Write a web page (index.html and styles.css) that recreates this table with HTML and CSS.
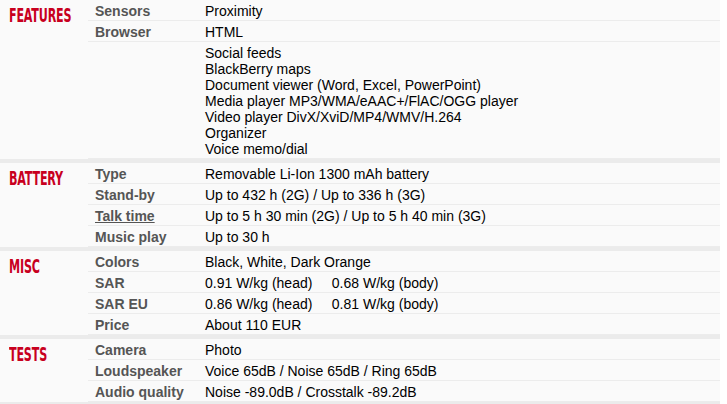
FILE: index.html
```html
<!DOCTYPE html>
<html>
<head>
<meta charset="utf-8">
<link rel="stylesheet" href="styles.css">
</head>
<body>
<div class="specs">
  <div class="section">
    <div class="title"><span>FEATURES</span></div>
    <div class="rows">
      <div class="row"><div class="label">Sensors</div><div class="value">Proximity</div></div>
      <div class="row"><div class="label">Browser</div><div class="value">HTML</div></div>
      <div class="row"><div class="label"></div><div class="value">Social feeds<br>BlackBerry maps<br>Document viewer (Word, Excel, PowerPoint)<br>Media player MP3/WMA/eAAC+/FlAC/OGG player<br>Video player DivX/XviD/MP4/WMV/H.264<br>Organizer<br>Voice memo/dial</div></div>
    </div>
  </div>
  <div class="section">
    <div class="title"><span>BATTERY</span></div>
    <div class="rows">
      <div class="row"><div class="label">Type</div><div class="value">Removable Li-Ion 1300 mAh battery</div></div>
      <div class="row"><div class="label">Stand-by</div><div class="value">Up to 432 h (2G) / Up to 336 h (3G)</div></div>
      <div class="row"><div class="label"><a class="link" href="#">Talk time</a></div><div class="value">Up to 5 h 30 min (2G) / Up to 5 h 40 min (3G)</div></div>
      <div class="row"><div class="label">Music play</div><div class="value">Up to 30 h</div></div>
    </div>
  </div>
  <div class="section">
    <div class="title"><span>MISC</span></div>
    <div class="rows">
      <div class="row"><div class="label">Colors</div><div class="value">Black, White, Dark Orange</div></div>
      <div class="row"><div class="label">SAR</div><div class="value">0.91 W/kg (head) &nbsp; &nbsp; 0.68 W/kg (body)</div></div>
      <div class="row"><div class="label">SAR EU</div><div class="value">0.86 W/kg (head) &nbsp; &nbsp; 0.81 W/kg (body)</div></div>
      <div class="row"><div class="label">Price</div><div class="value">About 110 EUR</div></div>
    </div>
  </div>
  <div class="section">
    <div class="title"><span>TESTS</span></div>
    <div class="rows">
      <div class="row"><div class="label">Camera</div><div class="value">Photo</div></div>
      <div class="row"><div class="label">Loudspeaker</div><div class="value">Voice 65dB / Noise 65dB / Ring 65dB</div></div>
      <div class="row"><div class="label">Audio quality</div><div class="value">Noise -89.0dB / Crosstalk -89.2dB</div></div>
    </div>
  </div>
</div>
</body>
</html>
```

FILE: styles.css
```css
html, body {
  margin: 0;
  padding: 0;
  background: #ffffff;
}
body {
  font-family: "Liberation Sans", Arial, sans-serif;
  font-size: 14px;
  color: #000;
}
.specs {
  width: 720px;
  background: #fafafa;
}
.section {
  display: flex;
  border-bottom: 4px solid #ebebeb;
}
.title {
  width: 88px;
  flex: none;
  padding: 5px 0 0 9px;
  box-sizing: border-box;
}
.title span {
  display: inline-block;
  font-family: "DejaVu Sans Condensed", "Liberation Sans", sans-serif;
  font-weight: bold;
  font-size: 20px;
  line-height: 20px;
  color: #c8001e;
  transform: scaleX(0.62);
  transform-origin: left center;
  letter-spacing: -0.3px;
}
.rows {
  flex: 1;
}
.row {
  display: flex;
  border-bottom: 1px solid #ececec;
  line-height: 16px;
}
.label {
  width: 117px;
  flex: none;
  padding: 3px 0 1px 7px;
  box-sizing: border-box;
  font-weight: bold;
  color: #555;
}
.link {
  color: #555;
  text-decoration: underline;
}
.value {
  padding: 3px 0 1px;
  color: #000;
}
```
